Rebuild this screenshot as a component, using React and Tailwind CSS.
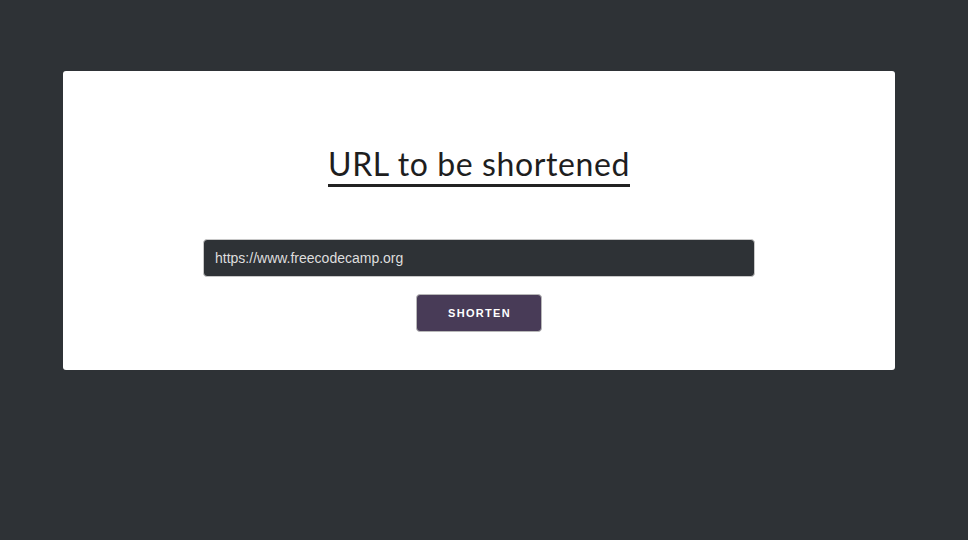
export default function App() {
  return (
    <div className="min-h-[540px] w-full bg-[#2e3236] pt-[71px] pl-[63px]" style={{ fontFamily: "'Open Sans', sans-serif" }}>
      <div className="bg-white rounded-[3px] w-[832px] h-[299px] flex flex-col items-center pt-[146px] relative">
        <div className="absolute left-0 right-0 top-[75px] flex justify-center">
          <h1 className="text-[32px] leading-[36px] text-[#1e1e1e] border-b-[3px] border-[#222] pb-[2px] font-[Lato,'Noto_Sans',sans-serif] tracking-[0.6px]">
            URL to be shortened
          </h1>
        </div>
        <div className="mt-[22px] w-[552px] h-[38px] rounded-[4px] border border-[#c8c8c8] bg-[#2e3236] flex items-center px-[11px]">
          <span className="text-[14px] text-[#dedede] font-['Liberation_Sans',Arial,sans-serif]">https://www.freecodecamp.org</span>
        </div>
        <button className="mt-[17px] w-[126px] h-[38px] rounded-[4px] border border-[#b8b8b8] bg-[#483b57] text-white text-[11px] font-bold tracking-[1.3px] font-['Liberation_Sans',Arial,sans-serif] flex items-center justify-center pl-[1px]">
          SHORTEN
        </button>
      </div>
    </div>
  );
}
